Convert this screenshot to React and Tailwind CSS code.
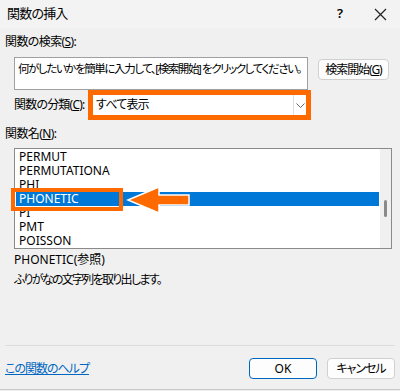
export default function App() {
  const items = ["PERMUT", "PERMUTATIONA", "PHI", "PHONETIC", "PI", "PMT", "POISSON"];
  const font = "font-['Noto_Sans','Noto_Sans_CJK_JP',sans-serif] [font-feature-settings:'palt']";

  return (
    <div className={`w-[400px] h-[391px] bg-[#f0f0f0] text-[12px] text-[#000] overflow-hidden ${font}`}>
      {/* Title bar */}
      <div className="h-[28px] bg-[#f3f3f3] flex items-center">
        <span className="pl-[7px] text-[13px] tracking-[-0.8px]">関数の挿入</span>
        <div className="ml-auto flex">
          <span className="w-[40px] text-center text-[13px] font-semibold">?</span>
          <span className="w-[40px] flex items-center justify-center">
            <svg width="13" height="13" viewBox="0 0 13 13">
              <path d="M1 1L12 12M12 1L1 12" stroke="#222" strokeWidth="1.2" />
            </svg>
          </span>
        </div>
      </div>

      <div className="px-[5px]">
        <p className="mt-[6px] h-[16px] leading-[16px] tracking-[-0.6px]">
          関数の検索(<span className="underline">S</span>):
        </p>

        <div className="mt-[7px] flex items-start">
          <div className="ml-[9px] w-[294px] h-[33px] bg-white border border-[#a0a0a0] px-[3px] pt-[4px] leading-[14px] whitespace-nowrap overflow-hidden text-[11.5px] tracking-[-1.4px]">
            何がしたいかを簡単に入力して、[検索開始] をクリックしてください。
          </div>
          <button className="ml-[10px] mt-[2px] w-[71px] h-[21px] bg-[#fdfdfd] border border-[#d0d0d0] rounded-[4px] leading-[19px] tracking-[-1.1px] whitespace-nowrap">
            検索開始(<span className="underline">G</span>)
          </button>
        </div>

        <div className="flex items-center h-[30px]">
          <span className="ml-[9px] w-[74px] whitespace-nowrap tracking-[-0.8px]">
            関数の分類(<span className="underline">C</span>):
          </span>
          <div className="w-[223px] h-[30px] border-[5px] border-[#ff6a00] bg-white flex items-center">
            <span className="flex-1 pl-[3px] text-[12px] tracking-[-0.8px]">すべて表示</span>
            <span className="w-[13px] h-full border-l border-[#e0e0e0] flex items-center justify-center">
              <svg width="9" height="5" viewBox="0 0 9 5">
                <path d="M0.5 0.5L4.5 4.5L8.5 0.5" fill="none" stroke="#666" strokeWidth="1" />
              </svg>
            </span>
          </div>
        </div>

        <p className="mt-[6px] h-[16px] leading-[16px] tracking-[-0.6px]">
          関数名(<span className="underline">N</span>):
        </p>

        <div className="relative mt-[6px] ml-[9px] w-[378px] h-[101px] bg-white border border-[#8a8a8a] flex">
          <div className="w-[364px] pl-[1px] pt-[1px]">
            {items.map((name) => (
              <div
                key={name}
                className={`h-[14px] leading-[14px] pl-[3px] ${name === "PHONETIC" ? "bg-[#0078d7] text-white" : ""}`}
              >
                {name}
              </div>
            ))}
          </div>
          <div className="ml-[1px] flex-1 bg-[#f0f0f0] flex justify-center">
            <div className="mt-[51px] w-[3px] h-[17px] bg-[#8a8a8a] rounded-full" />
          </div>

          {/* annotation */}
          <div className="absolute left-[-4px] top-[39px] w-[112px] h-[23px] border-[4px] border-[#ff6a00]" />
          <svg className="absolute left-[110px] top-[36px]" width="68" height="30" viewBox="0 0 68 30">
            <path
              d="M3 15L34 2V10H64V20H34V28Z"
              fill="#ff6a00"
              stroke="#fff"
              strokeWidth="1.5"
              strokeLinejoin="miter"
            />
          </svg>
        </div>

        <p className="mt-[3px] ml-[9px] h-[16px] leading-[16px]">PHONETIC(参照)</p>
        <p className="mt-[4px] ml-[9px] h-[16px] leading-[16px] tracking-[-1.7px]">ふりがなの文字列を取り出します。</p>

        <div className="mt-[57px] h-px bg-[#dcdcdc]" />

        <div className="mt-[12px] h-[21px] flex items-center">
          <a className="text-[#0067c0] underline tracking-[-1px]">この関数のヘルプ</a>
          <button className="ml-auto w-[68px] h-[21px] bg-[#fdfdfd] border border-[#0067c0] rounded-[4px]">OK</button>
          <button className="ml-[10px] w-[68px] h-[21px] bg-[#fdfdfd] border border-[#d0d0d0] rounded-[4px] tracking-[-1px]">キャンセル</button>
        </div>
      </div>
      <div className="mt-[10px] h-px bg-[#c8c8c8]" />
    </div>
  );
}
